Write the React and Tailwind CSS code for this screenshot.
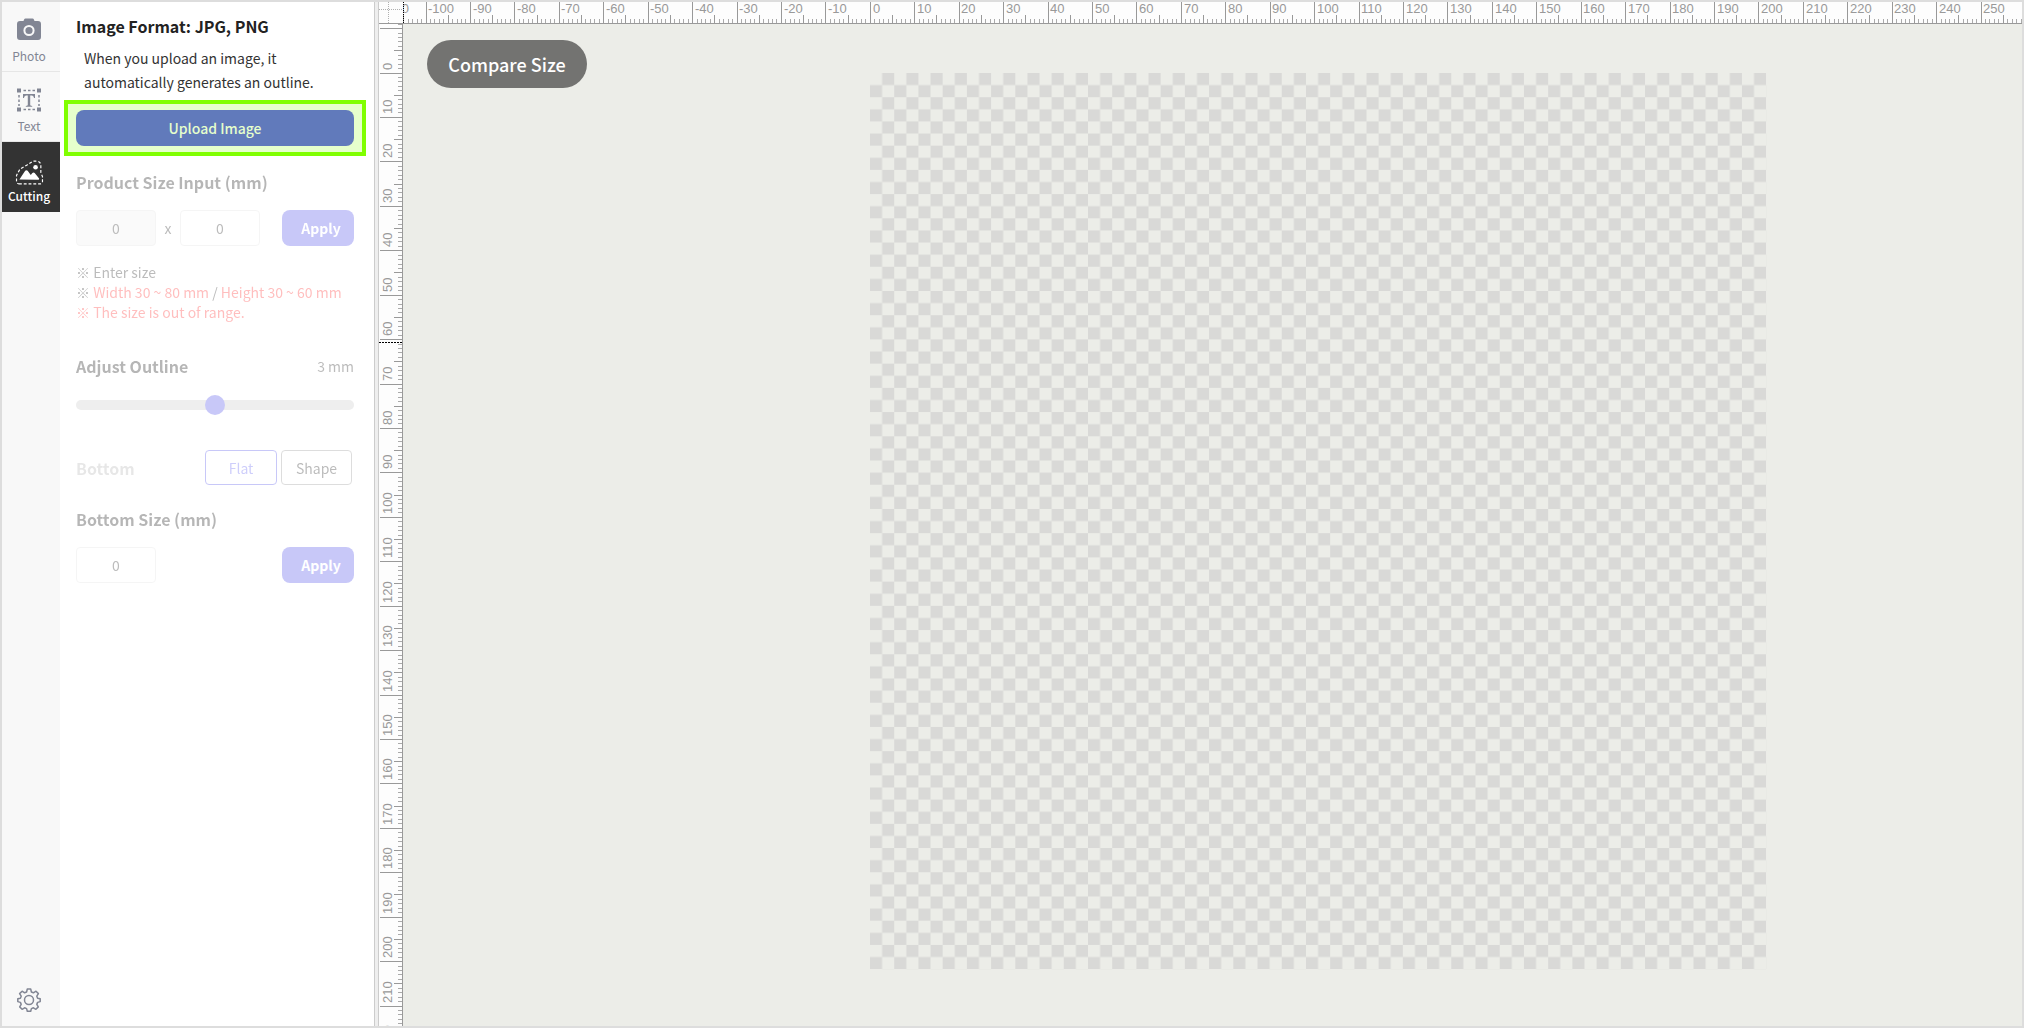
const UNIT = 4.443
const ORIGIN_X = 467
const ORIGIN_Y = 49

const SANS = "font-['Noto_Sans_CJK_KR','Noto_Sans',sans-serif]"
const HEADING = 'text-base leading-6 font-bold text-[#222]'
const APPLY = 'h-9 w-18 rounded-lg bg-[#5959ea] pl-1.5 text-sm font-bold text-white'
const SIZE_INPUT = 'h-9 w-20 rounded border border-[#e0e0e0] text-center text-sm text-[#333]'

const LEVELS = Array.from({ length: 376 }, (_, i) => i - 113)

function tickSize(n) {
  if (n % 10 === 0) return 22
  return n % 5 === 0 ? 8 : 4
}

function RulerX() {
  return (
    <svg className="h-full w-full font-['Liberation_Sans',sans-serif]" aria-hidden="true">
      {LEVELS.map(n => {
        const x = Math.floor(ORIGIN_X + 0.3 + n * UNIT)
        const size = tickSize(n)
        return <rect key={n} x={x} y={21 - size} width="1" height={size} fill={size === 4 ? '#aaa' : '#999'} />
      })}
      {LEVELS.filter(n => n % 10 === 0).map(n => (
        <text key={n} x={Math.floor(ORIGIN_X + n * UNIT) + 3} y="11" fontSize="13" fill="#999">{n}</text>
      ))}
      <path d="M0.5 0V21" stroke="#000" strokeDasharray="1 1" />
    </svg>
  )
}

function RulerY() {
  const levels = LEVELS.filter(n => n >= -11 && n <= 220)
  return (
    <svg className="absolute inset-0 h-full w-full font-['Liberation_Sans',sans-serif]" aria-hidden="true">
      {levels.map(n => {
        const y = Math.floor(ORIGIN_Y + n * UNIT)
        const size = tickSize(n)
        return <rect key={n} x={23 - size} y={y} width={size} height="1" fill={size === 4 ? '#aaa' : '#999'} />
      })}
      {levels.filter(n => n >= 0 && n % 10 === 0).map(n => {
        const y = Math.floor(ORIGIN_Y + n * UNIT) - 3
        return <text key={n} transform={`translate(13 ${y}) rotate(-90)`} fontSize="13" fill="#999">{n}</text>
      })}
      <path d="M0 318.5H24" stroke="#000" strokeDasharray="2 1" />
    </svg>
  )
}

function Checkerboard() {
  return (
    <svg width="897" height="897" className="mt-[49px] ml-[467px] shrink-0" aria-hidden="true">
      <defs>
        <pattern id="cells" width="24.22" height="24.22" patternUnits="userSpaceOnUse">
          <path d="M12.11 0h12.11v12.11H12.11zM0 12.11h12.11v12.11H0z" fill="#d9d9d7" />
        </pattern>
      </defs>
      <rect width="896.2" height="896.2" fill="url(#cells)" />
    </svg>
  )
}

function PhotoIcon() {
  return (
    <svg width="24" height="24" viewBox="0 0 24 24" aria-hidden="true">
      <path d="M8.500 0.500h7q1 0 1.400 1l.6 1.500H21a3 3 0 0 1 3 3V19a3 3 0 0 1-3 3H3a3 3 0 0 1-3-3V6a3 3 0 0 1 3-3h3.500l.6-1.500q.4-1 1.400-1z" fill="#828694" />
      <circle cx="12" cy="12.500" r="4.600" fill="none" stroke="#f8f8f8" strokeWidth="2" />
    </svg>
  )
}

function TextIcon() {
  return (
    <svg width="24" height="24" viewBox="0 0 24 24" aria-hidden="true" fill="#828694">
      <path d="M0 .5h4v4H0zM20 .5h4v4h-4zM0 19.500h4v4H0zM20 19.500h4v4h-4z" />
      <path d="M6.500 2.500h11.500M6.500 21.500h11.500M2 7v11M22 7v11" stroke="#828694" strokeWidth="1.500" strokeDasharray="2.500 2" />
      <path d="M6 6h12v4h-1c-.3-1.800-.8-2.600-2.500-2.600h-1.300v9.100c0 1 .4 1.300 2 1.400v.8H8.800v-.8c1.600-.1 2-.4 2-1.400V7.400H9.500C7.800 7.400 7.300 8.200 7 10H6z" />
    </svg>
  )
}

function CuttingIcon() {
  return (
    <svg width="29" height="25" viewBox="0 0 30 26" aria-hidden="true">
      <path d="M4 24.800h22.500a2 2 0 0 0 2-2v-5.500l-1.700-4.300V4.500q-1-3-4.500-3.300h-3.500L12 5.500 5 9.500 1.500 16v6q.3 2.500 2.500 2.800z" fill="none" stroke="#fff" strokeWidth="1.200" strokeDasharray="3 2" />
      <path d="M4.500 20.300l6-9q1.300-1.500 2.600 0l3.200 4.200 1.700-2q1.200-1.200 2.400 0l4.600 5.800q.3 1.300-1 1.300z" fill="#fff" />
      <circle cx="21.300" cy="7.600" r="2.400" fill="#fff" />
    </svg>
  )
}

function SettingsIcon() {
  return (
    <svg width="24" height="24" viewBox="0 0 24 24" fill="none" stroke="#828694" strokeWidth="1.500" strokeLinejoin="round" aria-hidden="true">
      <path d="M10.300 1h3.400l.7 3 2 .8 2.600-1.600 2.400 2.400-1.600 2.600.8 2 2.600.6v2.800l-2.600.8-.8 2 1.500 2.500-2.400 2.400-2.500-1.500-2 .8-.7 2.600h-3.400l-.7-2.600-2-.8-2.500 1.500-2.400-2.400 1.500-2.500-.8-2-2.600-.8v-2.800l2.600-.6.8-2-1.600-2.600L5.100 3.200l2.500 1.600 2-.8z" />
      <circle cx="12" cy="12" r="4.500" />
    </svg>
  )
}

function NavItem({ icon, label, active }) {
  return (
    <button
      type="button"
      aria-pressed={!!active}
      className={`flex h-[70px] w-full flex-col items-center justify-end border-b pr-1 pb-[5px] text-xs leading-5 ${active ? 'gap-px border-[#333] bg-[#333] font-medium text-white' : 'gap-1 border-[#e6e6e6] text-[#828694]'}`}
    >
      {icon}
      {label}
    </button>
  )
}

function Sidebar() {
  return (
    <nav className="flex w-[58px] shrink-0 flex-col bg-[#f8f8f8]">
      <NavItem icon={<PhotoIcon />} label="Photo" />
      <NavItem icon={<TextIcon />} label="Text" />
      <NavItem icon={<CuttingIcon />} label="Cutting" active />
      <button type="button" aria-label="Settings" className="mt-auto flex justify-center pr-1 pb-[14px]">
        <SettingsIcon />
      </button>
    </nav>
  )
}

function Panel() {
  return (
    <aside className="w-[314px] shrink-0 bg-white px-4 pt-3 pr-5">
      <h2 className={HEADING}>Image Format: JPG, PNG</h2>
      <p className="mt-2 pl-2 text-sm leading-6 text-[#333]">
        When you upload an image, it<br />automatically generates an outline.
      </p>

      <div className="relative mt-4">
        <button type="button" className="block h-9 w-full rounded-lg bg-[#5959ea] text-sm font-medium text-white">
          Upload Image
        </button>
        <div className="pointer-events-none absolute -inset-x-3 -inset-y-[10px] border-4 border-[#80ff00] bg-[#80ff00]/20" />
      </div>

      <div className="opacity-33">
        <h2 className={`mt-6 ${HEADING}`}>Product Size Input (mm)</h2>
        <div className="mt-4 flex items-center">
          <input aria-label="Width" defaultValue="0" className={`${SIZE_INPUT} bg-[#eee]`} />
          <span className="w-6 text-center text-sm text-[#333]">x</span>
          <input aria-label="Height" defaultValue="0" className={SIZE_INPUT} />
          <button type="button" className={`ml-auto ${APPLY}`}>Apply</button>
        </div>
        <p className="mt-4 text-sm leading-5 text-[#333]">
          ※ Enter size<br />
          ※ <span className="text-[#ff3b3b]">Width 30 ~ 80 mm</span> / <span className="text-[#ff3b3b]">Height 30 ~ 60 mm</span><br />
          <span className="text-[#ff3b3b]">※ The size is out of range.</span>
        </p>

        <div className="mt-8 flex items-center justify-between">
          <label htmlFor="outline" className={HEADING}>Adjust Outline</label>
          <output htmlFor="outline" className="text-sm leading-5 text-[#333]">3 mm</output>
        </div>
        <input
          id="outline"
          type="range"
          min="1"
          max="5"
          defaultValue="3"
          className="mt-[22px] block h-[10px] w-full appearance-none rounded-full bg-[#ccc] [&::-webkit-slider-thumb]:size-5 [&::-webkit-slider-thumb]:appearance-none [&::-webkit-slider-thumb]:rounded-full [&::-webkit-slider-thumb]:bg-[#5959ea]"
        />

        <div className="mt-10 flex items-center gap-1">
          <h2 className={`mr-auto opacity-33 ${HEADING}`}>Bottom</h2>
          <button type="button" className="h-[35px] w-18 rounded border border-[#5959ea] text-sm text-[#6a6af2]">Flat</button>
          <button type="button" className="mr-[2px] h-[35px] w-[71px] rounded border border-[#999] text-sm text-[#333]">Shape</button>
        </div>

        <h2 className={`mt-[22px] ${HEADING}`}>Bottom Size (mm)</h2>
        <div className="mt-4 flex items-center justify-between">
          <input aria-label="Bottom size" defaultValue="0" className={SIZE_INPUT} />
          <button type="button" className={APPLY}>Apply</button>
        </div>
      </div>
    </aside>
  )
}

export default function App() {
  return (
    <div className={`flex h-screen overflow-hidden border-2 border-[#ddd] bg-[#ecede8] ${SANS}`}>
      <Sidebar />
      <Panel />
      <div className="w-[5px] shrink-0 border-x border-[#ccc] bg-[#eee]" />

      <div className="flex min-w-0 flex-1 flex-col">
        <div className="flex h-[22px] shrink-0 border-b border-[#999] bg-[#fdfdfd]">
          <svg width="24" height="21" className="shrink-0" aria-hidden="true">
            <path d="M0 7.500H24M9.500 0V21" stroke="#b0b0b0" strokeDasharray="1 1" />
          </svg>
          <RulerX />
        </div>
        <div className="flex min-h-0 flex-1">
          <div className="relative w-6 shrink-0 border-r border-[#999] bg-[#fdfdfd]">
            <RulerY />
          </div>
          <main className="relative min-w-0 flex-1 overflow-hidden">
            <Checkerboard />
            <button type="button" className="absolute top-4 left-6 h-12 w-40 rounded-full bg-[#737371] text-lg font-medium text-white">
              Compare Size
            </button>
          </main>
        </div>
      </div>
    </div>
  )
}
